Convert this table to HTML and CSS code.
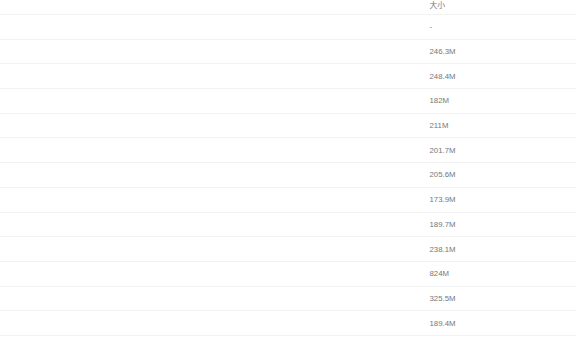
FILE: index.html
```html
<!DOCTYPE html>
<html>
<head>
<meta charset="utf-8">
<link rel="stylesheet" href="styles.css">
</head>
<body>
<div class="table">
  <div class="row head"><div class="name"></div><div class="size">大小</div></div>
  <div class="row"><div class="name"></div><div class="size">-</div></div>
  <div class="row"><div class="name"></div><div class="size">246.3M</div></div>
  <div class="row"><div class="name"></div><div class="size">248.4M</div></div>
  <div class="row"><div class="name"></div><div class="size">182M</div></div>
  <div class="row"><div class="name"></div><div class="size">211M</div></div>
  <div class="row"><div class="name"></div><div class="size">201.7M</div></div>
  <div class="row"><div class="name"></div><div class="size">205.6M</div></div>
  <div class="row"><div class="name"></div><div class="size">173.9M</div></div>
  <div class="row"><div class="name"></div><div class="size">189.7M</div></div>
  <div class="row"><div class="name"></div><div class="size">238.1M</div></div>
  <div class="row"><div class="name"></div><div class="size">824M</div></div>
  <div class="row"><div class="name"></div><div class="size">325.5M</div></div>
  <div class="row"><div class="name"></div><div class="size">189.4M</div></div>
</div>
</body>
</html>
```
FILE: styles.css
```css
html, body {
  margin: 0;
  padding: 0;
  background: #ffffff;
}
body {
  font-family: "Liberation Sans", "Noto Sans CJK SC", sans-serif;
  font-size: 7.8px;
  color: #777777;
  overflow: hidden;
}
.table {
  display: flex;
  flex-direction: column;
}
.row {
  display: grid;
  grid-template-columns: 429.5px 1fr;
  align-items: center;
  height: 23.7px;
  border-bottom: 1px solid #f2f2f2;
}
.row.head {
  height: 14px;
  align-items: start;
}
.row.head .size {
  margin-top: -1.5px;
}
.size {
  white-space: nowrap;
}
```
